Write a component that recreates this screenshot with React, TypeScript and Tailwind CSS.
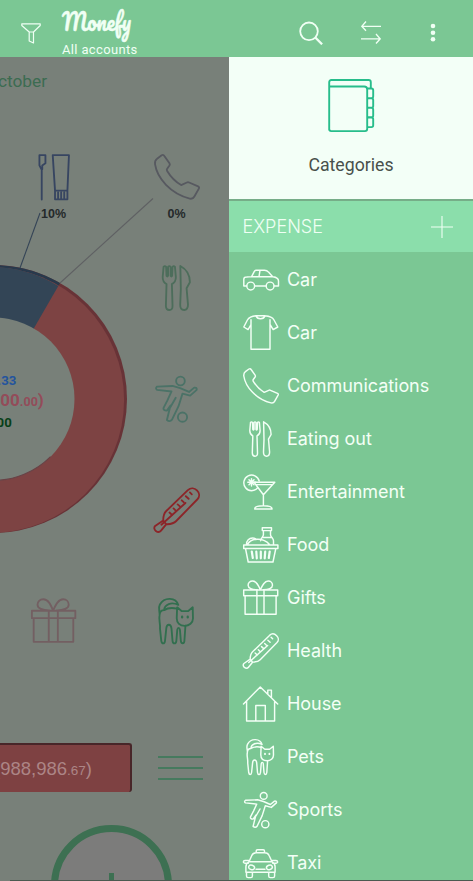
import React from "react";

type IconProps = { name: string; size?: number; className?: string };

const shapes: Record<string, React.ReactNode> = {
  car: (
    <>
      <path d="M3.7 24H.8v-6.8c0-1.5 1-2.2 2.8-2.2l5-.4 2.6-5c.5-1 1-1.3 2-1.3h8.3c2 0 3 .6 4 1.8l4.2 4.7c4 .5 5.8 1.7 5.8 4.2v5h-4.3M11.8 24h11.1M8.5 14.7h20.2M17 8.3l-1 6.4" />
      <circle cx="7.7" cy="24" r="3.9" />
      <circle cx="27.1" cy="24" r="3.9" />
    </>
  ),
  shirt: (
    <path d="M13 .8C9 1.2 5.7 2.8 4.4 5L.8 12l4.3 2.6L8 9.5V34.2h19V9.5l3.2 5.1 4.6-2.6L31 5C29.8 2.8 27 1.2 22 .8H13c1.2 4 7.8 4 9 0M8 9.5V4.8M27 9.5V4.8" />
  ),
  phone: (
    <path d="M6 1q1.3-.8 2.1.5l4 5.7q.6.9 0 1.8L10.3 11.5q-.6.8 0 1.8Q14.5 20.3 21.2 24.3l4.5-2q.9-.4 1.8 0l7 3q1.2.6.6 1.8l-3.5 6.2q-1.1 2.1-3.6 1.6C13 31 2.4 19 .8 8Q.5 5 2.4 3.7z" />
  ),
  eat: (
    <>
      <path d="M7.5 1.5 6.8 9.5q-.1 3.7 3 5.5L9.3 32q.1 3.2 2.7 3.2t2.5-3.2L14 15q3.2-1.8 3.1-5.5l-.7-8q-1-1.3-1.9 0l-.3 7q-.6 1-1.2 0v-7q-1-1.3-2 0v7q-.6 1-1.2 0l-.3-7q-1-1.3-2 0z" />
      <path d="M20.6.8C25.3 3.3 28.1 7.2 28.1 13.5l-2.6 4.7L26.6 31q0 4.2-3 4.2-3.2 0-3.1-4.2l.5-12.5z" />
    </>
  ),
  drink: (
    <>
      <path d="M14.7 13.8A7.8 7.8 0 1 1 16.2 7M4.8 8.3h8M8.5 4.6v7.4M6 5.8l5 5M6 10.8l5-5" />
      <path d="M11 8.2h20.8L20.4 20.8zM13.2 10.6h16.3M20.4 20.8v10.4M11.7 34.9c0-2.5 4-3.1 8.7-3.1s8.7.6 8.7 3.1z" />
    </>
  ),
  food: (
    <>
      <path d="M19.3.8h9.2v2.8h-9.2zM20.4 3.6v4.1c0 2-2.8 3.5-2.8 6M27.5 3.6v4.1c0 2 3 3.5 3 6v4M19.3 10.5h9.8M3.5 17.5c0-3.7 2.6-6.5 6-6.5 1.8 0 3 .5 4 1.5M4.5 17.5c3.5-6.5 15.5-7.5 22 0M.7 18h34.2v3.5H.7zM2.5 21.5 5.2 35H30l2.8-13.5" />
      <path d="M8.8 24.5 9.8 31M13.3 24.5l.5 6.8M17.8 24.5v6.8M22.2 24.5l-.5 6.8M26.7 24.5 25.8 31" strokeWidth="2.2" />
    </>
  ),
  gift: (
    <path d="M.7 10h34v5.8H.7zM2.1 15.8v18.5h31V15.8M13.9 10v24.3M21 10v24.3M14.5 9.7C9 9.8 5.1 8 5.1 5.2c0-2.3 1.8-4.2 4.5-4.2C13.5 1 15.3 5 17.3 9.7 19.5 5 21.5 1 25.2 1c2.5 0 4.3 1.9 4.3 4.2 0 2.8-4 4.6-9.5 4.5" />
  ),
  health: (
    <path d="M7.2 26.2C7.2 23.4 7.3 21 9.6 18.8L26.5 2.4C31.3-1.9 38.2 5 34 9.6L17.2 26.8c-2.2 2.3-4.8 2.2-7.7 2.4l-4 5c-2.3 2.8-7-1.1-4.6-3.7zM7.2 26.2l2.4 3M5.8 29.5l18.8-17M12.1 20l2.2 2M15.3 16.8l1.5 1.5M18.5 13.6l2.2 2M21.7 10.4l1.5 1.5M24.9 7.2l2.2 2M28.1 4.2l1.5 1.5" />
  ),
  house: (
    <path d="M.5 18 17.3.9 34.7 18M3.6 15v20h28V15M12.8 35V19.5h9.5V35M24.8 8.2V4.1h3.6v7.6" />
  ),
  pets: (
    <g transform="translate(-1.6 0)">
      <path d="M20.6 5.4C18.8-.6 9.7-1.2 6.2 5.1c-1.8 3.1.3 5.4-.3 8.9-.7 3 .8 6.2.4 10l1 9.5c.5 2.8 2.6 2.6 2.9 0l1-9.6c.3-4 3.7-4 4.1 0l.8 9.6c.3 2.7 2.7 2.7 3 0l.7-8.5c.3-2.2 1.8-2.2 2.1 0l.7 8.5c.4 2.6 2.5 2.6 2.8 0l.8-11.8M20.6 5.4c-5.4-2.7-10.8-.5-11.1 4.1 3.2-2.1 6.5-2 10.1-1.2M6 13c.2-2.1 1.4-3.5 3.5-3.5" />
      <path d="M19.7 7.3l3.7 3h4.8l3.7-3 .2 8.8c0 3.3-3 5.7-6.3 5.7-4 0-6.4-2.4-6.4-6z" />
      <path d="M23.6 14.6v.6M28 14.6v.6" strokeWidth="1.8" />
    </g>
  ),
  sports: (
    <g transform="translate(-1 0)">
      <circle cx="21.7" cy="3.9" r="3.4" />
      <circle cx="23.3" cy="32.2" r="3.6" />
      <path d="M21.5 9.5l6.9 3 4.1-3.4q2.3-.3 1.9 1.8l-5.1 4.5-6-1.6-3.1 9.8-5.1 10.6q-1.8 2.1-4 .2l2.8-11.3-2.8 4q-2.8.2-2.7-2l3.1-6 3.2-7-11.2-1.2q-1.8-1.2 0-2.6l12-.5zM18 17l-4 7" />
    </g>
  ),
  taxi: (
    <>
      <path d="M13.2 7.7V6q0-1.3 1.3-1.3h5.7q1.3 0 1.3 1.3v1.7M6 16.8l2.8-6.3q1.2-2.8 4.4-2.8h8.5q3.2 0 4.4 2.8l2.9 6.3zM6 16.8c-2.3 1-3.1 2.8-3.1 5v5.5h29.2v-5.5c0-2.2-.8-4-3.1-5M3.5 27.3V31q0 1.6 1.6 1.6h2.7q1.6 0 1.6-1.6v-3.7M25.7 27.3V31q0 1.6 1.6 1.6H30q1.6 0 1.6-1.6v-3.7M5.3 18.2H2.4C-.5 18.2.1 15.5 2 15.5h3.7M29.7 18.2h2.9c2.9 0 2.3-2.7.4-2.7h-3.7M13 24.3h9" />
      <ellipse cx="8.6" cy="22.4" rx="3" ry="2.2" transform="rotate(18 8.6 22.4)" />
      <ellipse cx="26.4" cy="22.4" rx="3" ry="2.2" transform="rotate(-18 26.4 22.4)" />
    </>
  ),
  toiletries: (
    <>
      <path d="M6.6.9h4.7v6.4L8.8 9v3M6.6.9v8l1.8 3.4v23.4" />
      <path d="M17 .9h12.7l-1.2 27.8H18.8zM18.8 28.7v6.8h9.7v-6.8M21.2 30v5.2M23.6 30v5.2M26 30v5.2" />
    </>
  ),
  book: (
    <>
      <path d="M1.2 51.2V3.2q0-2.2 2.2-2.2h37.2q2.2 0 2.2 2.2v6.3M1.2 7.5h35q3 0 3 3v39.3q0 2.3-2.2 2.3H3.2q-2 0-2-2" />
      <path d="M39.2 9.5h4.2q1.8 0 1.8 1.8v6q0 1.8-1.8 1.8h-4.2M39.2 19.3h4.2q1.8 0 1.8 1.8v5.8q0 1.8-1.8 1.8h-4.2M39.2 28.9h4.2q1.8 0 1.8 1.8v5.8q0 1.8-1.8 1.8h-4.2M39.2 38.5h4.2q1.8 0 1.8 1.8v6q0 1.8-1.8 1.8h-4.2" />
    </>
  ),
};

function Icon({ name, size = 36, className = "" }: IconProps) {
  return (
    <svg
      width={size}
      height={size}
      viewBox="0 0 36 36"
      fill="none"
      stroke="currentColor"
      strokeWidth={1.45}
      strokeLinejoin="round"
      strokeLinecap="round"
      className={"shrink-0 overflow-visible " + className}
    >
      {shapes[name]}
    </svg>
  );
}

const categories: [string, string][] = [
  ["car", "Car"],
  ["shirt", "Car"],
  ["phone", "Communications"],
  ["eat", "Eating out"],
  ["drink", "Entertainment"],
  ["food", "Food"],
  ["gift", "Gifts"],
  ["health", "Health"],
  ["house", "House"],
  ["pets", "Pets"],
  ["sports", "Sports"],
  ["taxi", "Taxi"],
];

type Cell = { icon?: string; color?: string; label?: string };

const cells: Cell[] = [
  { icon: "toiletries", color: "text-[#374561]", label: "10%" },
  { icon: "phone", color: "text-[#575960]", label: "0%" },
  {},
  { icon: "eat", color: "text-[#4d6d5b]" },
  {},
  { icon: "sports", color: "text-[#4b7267]" },
  {},
  { icon: "health", color: "text-[#8c2529]" },
  { icon: "gift", color: "text-[#735f62]" },
  { icon: "pets", color: "text-[#326f4f]" },
];

function Header() {
  return (
    <header className="flex h-[57px] shrink-0 bg-[#7bc794] text-[#f0fff4]">
      <svg width="20" height="21" viewBox="0 0 20 21" fill="none" stroke="currentColor" strokeWidth="1.2" strokeLinejoin="round" className="mt-[22.5px] ml-[21px] shrink-0">
        <path d="M.8.8h18.4v1.7L12.5 9v11l-4.3-2V9L.8 2.5zM8.2 9h4.3" />
      </svg>
      <div className="ml-[21px] w-[120px]">
        <div className="mt-[6px] h-[36px]">
          <svg width="74" height="36" className="overflow-visible" fill="currentColor">
            <text x="0" y="25" fontSize="24" fontWeight="400" stroke="currentColor" strokeWidth="0.4" textLength="69" lengthAdjust="spacingAndGlyphs" className="font-['Pacifico','Lobster','Brush_Script_MT',cursive]">
              Monefy
            </text>
          </svg>
        </div>
        <div className="font-[Roboto,sans-serif] text-[13px] leading-[15px] tracking-[0.35px]">All accounts</div>
      </div>
      <svg width="24" height="24" viewBox="0 0 24 24" fill="none" stroke="currentColor" className="mt-[21px] ml-[117px] shrink-0">
        <circle cx="10" cy="10.3" r="8.8" strokeWidth="1.8" />
        <path d="m16.3 16.5 6.8 6.8" strokeWidth="2.3" />
      </svg>
      <svg width="20" height="24" viewBox="0 0 20 24" fill="none" stroke="currentColor" strokeWidth="1.3" className="mt-[21px] ml-[38px] shrink-0">
        <path d="M20 5.3H1M5 .5.8 5.3 5 9.8M0 17.8h19M15 13l4.2 4.8-4.2 4.7" />
      </svg>
      <svg width="6" height="20" viewBox="0 0 6 20" fill="currentColor" className="mt-[23px] ml-[49px] shrink-0">
        <circle cx="3" cy="3" r="2.3" />
        <circle cx="3" cy="9.7" r="2.3" />
        <circle cx="3" cy="16.3" r="2.3" />
      </svg>
    </header>
  );
}

function Donut() {
  return (
    <svg width="229" height="400" viewBox="0 157 229 400" className="absolute top-[100px] left-0">
      <defs>
        <mask id="ring">
          <rect x="-150" y="157" width="400" height="400" fill="white" />
          <circle cx="-7" cy="399" r="81.5" fill="black" />
        </mask>
      </defs>
      <g mask="url(#ring)">
        <circle cx="-7" cy="399" r="134" fill="#683337" />
        <path d="M-7 399V265A134 134 0 0 1 60 283z" fill="#28394c" />
        <circle cx="-8.7" cy="400" r="132.8" fill="#7d4343" />
        <path d="M-7 399 L-20 267.3A132.8 132.8 0 0 1 58.3 286z" fill="#334556" />
      </g>
      <path d="M-7 480.5A81.5 81.5 0 0 0 50.6 456.6" fill="none" stroke="#684347" strokeWidth="1.2" />
      <path d="M40 213 20 268" stroke="#354457" strokeWidth="1.1" />
      <path d="M153 198.5 60 283" stroke="#5f6063" strokeWidth="1.1" />
      <g fontWeight="700" fontFamily="Roboto, sans-serif">
        <text x="16.3" y="385" fontSize="13.2" textAnchor="end" fill="#23549e">933.33</text>
        <text x="43.8" y="406" fontSize="17" textAnchor="end" fill="#934c59">(1,000,000<tspan fontSize="12.5">.00</tspan>)</text>
        <text x="11.7" y="426.5" fontSize="13.2" textAnchor="end" fill="#073f17">0.00</text>
      </g>
    </svg>
  );
}

function Overview() {
  return (
    <section className="relative flex w-[229px] shrink-0 flex-col overflow-hidden bg-[#788079]">
      <Donut />
      <div className="flex h-[97px] shrink-0 pt-[12px]">
        <span className="-ml-[14px] font-[Roboto,sans-serif] text-[17.3px] leading-6 text-[#3c6c51]">October</span>
      </div>
      <div className="-ml-[8px] grid w-[246px] shrink-0 auto-rows-[111px] grid-cols-2">
        {cells.map((cell, i) => (
          <div key={i} className="flex flex-col items-center">
            {cell.icon && <Icon name={cell.icon} size={46} className={cell.color} />}
            {cell.label && (
              <span className="mt-[7px] font-['Liberation_Sans',sans-serif] text-[12.5px] leading-[14px] font-bold text-[#252a2b]">{cell.label}</span>
            )}
          </div>
        ))}
      </div>
      <div className="mt-[34px] flex h-[49px] shrink-0 items-center">
        <div className="flex h-full w-[132px] items-center justify-end overflow-hidden rounded-r-[3px] border-t-2 border-r-2 border-[#482629] bg-[#7e4142] pr-[38px] font-['Liberation_Sans',sans-serif] text-[18.5px] whitespace-nowrap text-[#ac8586]">
          <span>(988,986<span className="text-[13.5px]">.67</span>)</span>
        </div>
        <div className="ml-[26px] flex w-[45px] flex-col gap-[9px]">
          <i className="h-[2px] bg-[#467a5e]" />
          <i className="h-[2px] bg-[#467a5e]" />
          <i className="h-[2px] bg-[#467a5e]" />
        </div>
      </div>
      <div className="mt-[33px] ml-[51px] flex size-[121px] shrink-0 justify-center rounded-full border-[7px] border-[#3d7052] bg-[#7c7c7b]">
        <i className="mt-[41px] h-[26px] w-[5px] bg-[#3d7052]" />
      </div>
    </section>
  );
}

function Drawer() {
  return (
    <aside className="flex min-w-0 flex-1 flex-col overflow-hidden bg-[#7bc794]">
      <div className="flex h-[142px] shrink-0 flex-col items-center bg-[#f3fff7]">
        <svg width="47" height="54" viewBox="0 0 47 54" fill="none" stroke="#27bd8b" strokeWidth="1.9" strokeLinejoin="round" className="mt-[22px]">
          {shapes.book}
        </svg>
        <div className="mt-[20px] font-[Roboto,sans-serif] text-[17.7px] leading-6 text-[#48504b]">Categories</div>
      </div>
      <div className="flex h-[53px] shrink-0 items-center justify-between border-t-2 border-[#76ad88] bg-[#8bdeab] pr-[20px] pl-[13.5px] text-[#effff4]">
        <span className="font-[Inter,sans-serif] text-[18px] font-light">EXPENSE</span>
        <svg width="22" height="22" viewBox="0 0 22 22" stroke="currentColor" strokeWidth="1.1">
          <path d="M11 0v22M0 11h22" />
        </svg>
      </div>
      <ul className="pt-px">
        {categories.map(([icon, label]) => (
          <li key={icon} className="flex h-[53px] items-center gap-[8px] pl-[14px] text-[#f3fff6]">
            <Icon name={icon} />
            <span className="font-[Inter,sans-serif] text-[18px] tracking-[-0.05px]">{label}</span>
          </li>
        ))}
      </ul>
    </aside>
  );
}

export default function App() {
  return (
    <div className="relative flex h-[881px] w-[473px] flex-col overflow-hidden">
      <Header />
      <main className="flex min-h-0 flex-1">
        <Overview />
        <Drawer />
      </main>
      <div className="absolute right-0 bottom-0 h-px w-[463px] bg-[#4b5a50]" />
    </div>
  );
}
